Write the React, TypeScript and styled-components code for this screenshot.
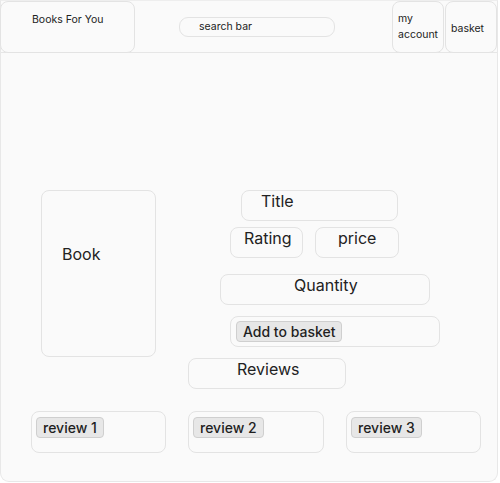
import React from "react";
import styled, { createGlobalStyle } from "styled-components";

const Global = createGlobalStyle`
  html, body { margin: 0; padding: 0; background: #ffffff; }
  body { font-family: Inter, "Noto Sans", sans-serif; color: #222; }
  * { box-sizing: border-box; }
`;

const Frame = styled.div`
  width: 498px;
  height: 482px;
  background: #fafafa;
  border: 1px solid #e8e8e8;
  border-top-color: #eeeeee;
  border-radius: 0 0 9px 9px;
  display: flex;
  flex-direction: column;
`;

const Header = styled.header`
  height: 52px;
  border-bottom: 1px solid #e6e6e6;
  display: flex;
  align-items: flex-start;
`;

const Box = styled.div<{ $w: number; $h: number; $pl?: number; $pt?: number; $fs?: number }>`
  width: ${(p) => p.$w}px;
  height: ${(p) => p.$h}px;
  border: 1px solid #e3e3e3;
  border-radius: 8px;
  background: #fafafa;
  padding-left: ${(p) => p.$pl ?? 0}px;
  padding-top: ${(p) => p.$pt ?? 0}px;
  font-size: ${(p) => p.$fs ?? 16}px;
  line-height: 1.2;
  flex-shrink: 0;
`;

const Logo = styled(Box)`
  margin-left: -1px;
`;

const Search = styled.div`
  margin-left: 44px;
  margin-top: 16px;
  width: 156px;
  height: 20px;
  border: 1px solid #e3e3e3;
  border-radius: 9px;
  padding-left: 19px;
  font-size: 10.5px;
  line-height: 18px;
`;

const Spacer = styled.div`
  flex: 1;
`;

const NavBox = styled(Box)<{ $mr?: number }>`
  margin-right: ${(p) => p.$mr ?? 0}px;
  line-height: 16px;
`;

const Main = styled.main`
  display: flex;
  flex-direction: column;
  padding-top: 137px;
`;

const TopRow = styled.div`
  display: flex;
  align-items: flex-start;
`;

const BookBox = styled(Box)`
  margin-left: 40px;
`;

const Details = styled.div`
  margin-left: 32px;
  display: flex;
  flex-direction: column;
  align-items: flex-start;
`;

const Field = styled(Box)<{ $ml?: number; $mt?: number }>`
  margin-left: ${(p) => p.$ml ?? 0}px;
  margin-top: ${(p) => p.$mt ?? 0}px;
`;

const Row = styled.div<{ $ml?: number; $mt?: number }>`
  display: flex;
  gap: 12px;
  margin-left: ${(p) => p.$ml ?? 0}px;
  margin-top: ${(p) => p.$mt ?? 0}px;
`;

const ActionBox = styled(Field)`
  padding: 4px 0 0 5px;
`;

const Button = styled.button`
  font-family: Inter, "Noto Sans", sans-serif;
  font-size: 14px;
  font-weight: 500;
  color: #1f1f1f;
  background: #e7e7e7;
  border: 1px solid #cfcfcf;
  border-radius: 4px;
  height: 21px;
  padding: 0 6px;
  line-height: 19px;
  cursor: pointer;
`;

const Reviews = styled.div`
  display: flex;
  gap: 22px;
  margin-left: 30px;
  margin-top: 22px;
`;

const ReviewCard = styled(Box)`
  padding: 5px 0 0 4px;
`;

export default function App() {
  return (
    <>
      <Global />
      <Frame>
        <Header>
          <Logo $w={135} $h={52} $pl={31} $pt={12} $fs={10.5}>
            Books For You
          </Logo>
          <Search>search bar</Search>
          <Spacer />
          <NavBox $w={52} $h={52} $pl={5} $pt={9} $fs={10.5} $mr={1}>
            my
            <br />
            account
          </NavBox>
          <NavBox $w={52} $h={52} $pl={5} $pt={19} $fs={10.5}>
            basket
          </NavBox>
        </Header>
        <Main>
          <TopRow>
            <BookBox $w={115} $h={167} $pl={20} $pt={54}>
              Book
            </BookBox>
            <Details>
              <Field $w={157} $h={31} $ml={53} $pl={19} $pt={1}>
                Title
              </Field>
              <Row $ml={42} $mt={6}>
                <Box $w={73} $h={31} $pl={13} $pt={1}>
                  Rating
                </Box>
                <Box $w={84} $h={31} $pl={22} $pt={1}>
                  price
                </Box>
              </Row>
              <Field $w={210} $h={31} $ml={32} $mt={16} $pl={73} $pt={1}>
                Quantity
              </Field>
              <ActionBox $w={210} $h={31} $ml={42} $mt={11}>
                <Button>Add to basket</Button>
              </ActionBox>
              <Field $w={158} $h={31} $mt={11} $pl={48} $pt={1}>
                Reviews
              </Field>
            </Details>
          </TopRow>
          <Reviews>
            <ReviewCard $w={135} $h={42}>
              <Button>review 1</Button>
            </ReviewCard>
            <ReviewCard $w={136} $h={42}>
              <Button>review 2</Button>
            </ReviewCard>
            <ReviewCard $w={135} $h={42}>
              <Button>review 3</Button>
            </ReviewCard>
          </Reviews>
        </Main>
      </Frame>
    </>
  );
}
